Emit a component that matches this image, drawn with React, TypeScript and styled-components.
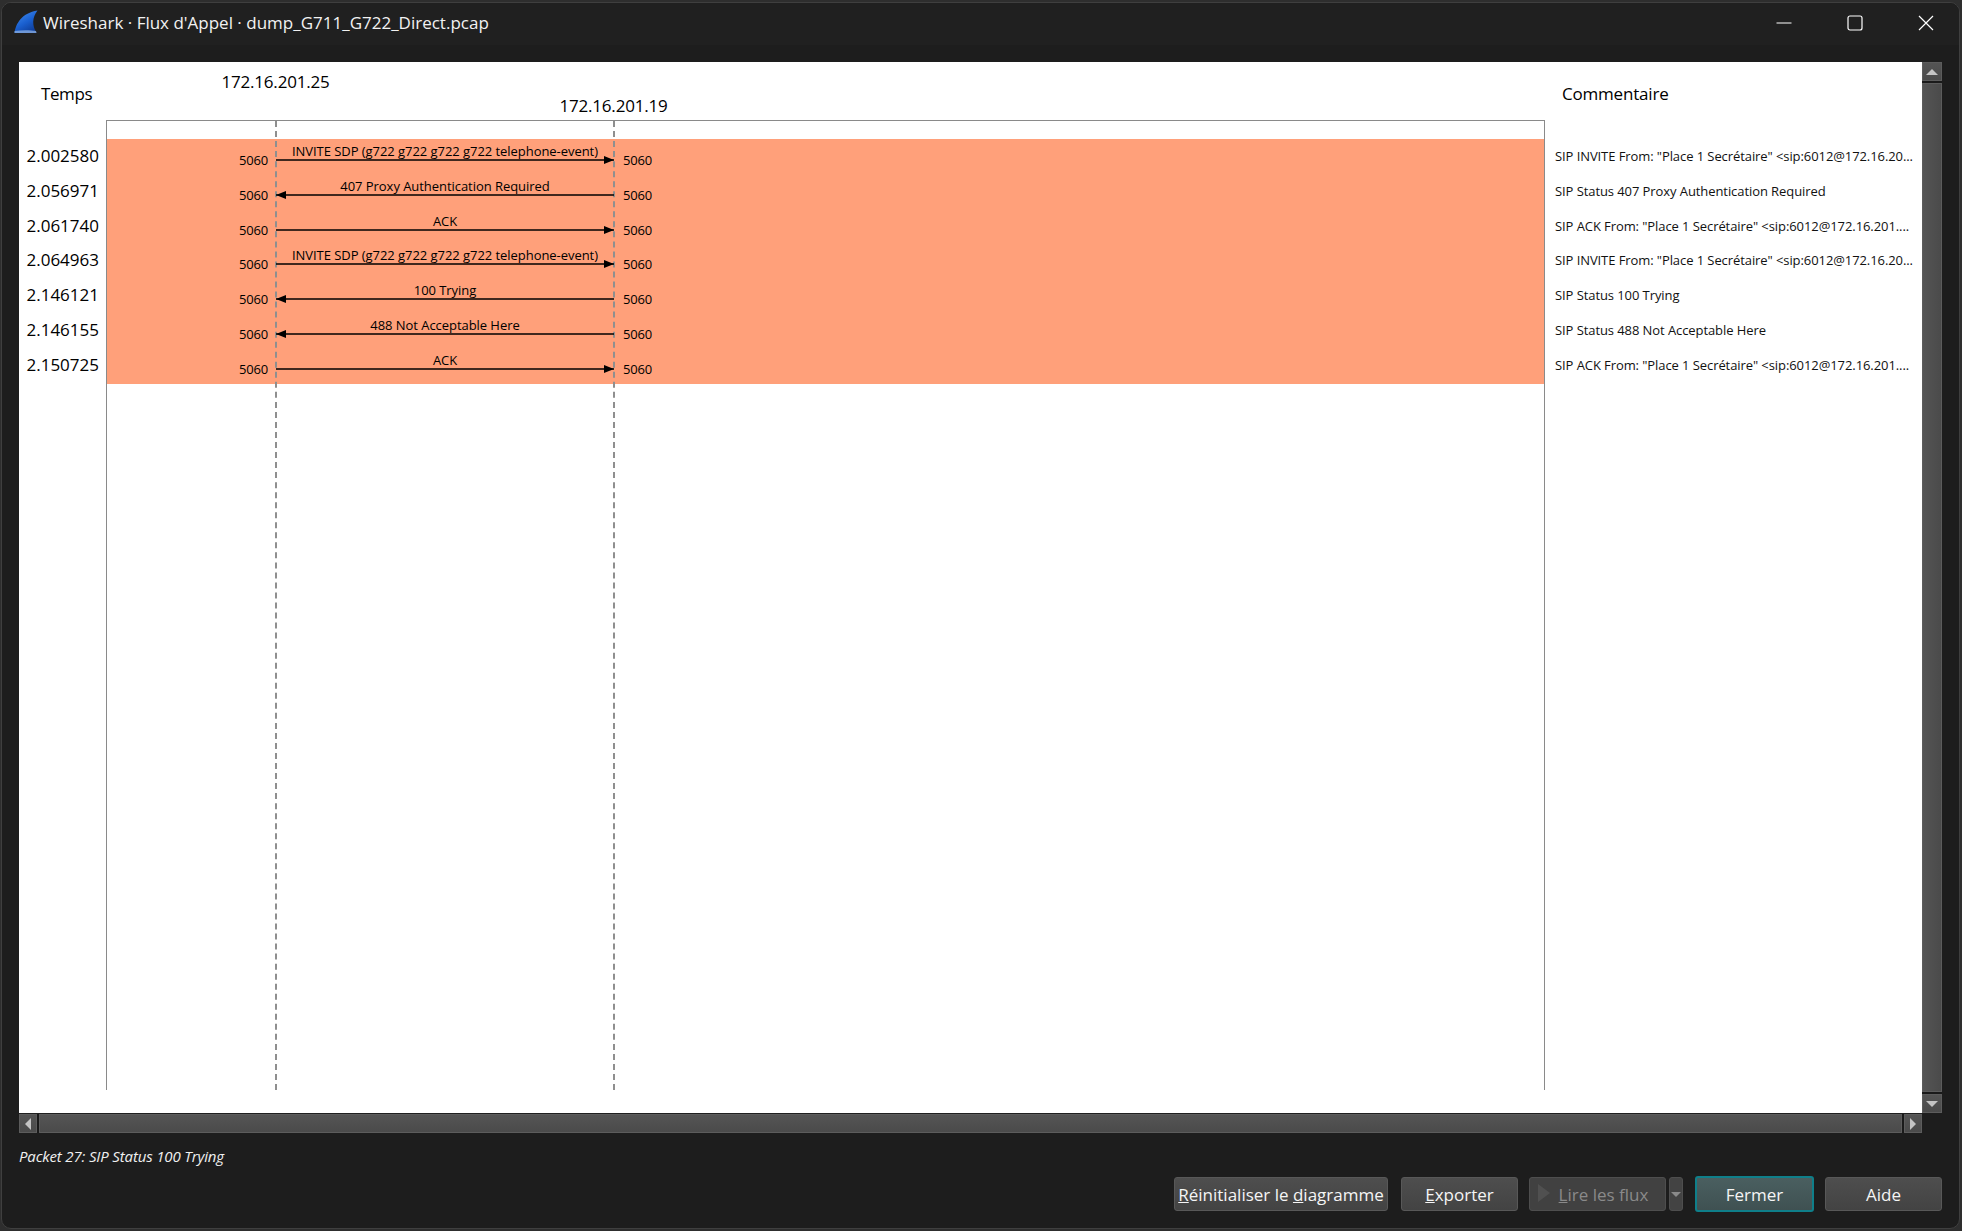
import React from 'react'
import styled, { createGlobalStyle } from 'styled-components'

const UI_FONT = '"Open Sans", "Noto Sans", "Liberation Sans", sans-serif'

const MESSAGES = [
  {
    time: '2.002580',
    label: 'INVITE SDP (g722 g722 g722 g722 telephone-event)',
    dir: 'right',
    comment: 'SIP INVITE From: "Place 1 Secrétaire" <sip:6012@172.16.20...',
  },
  {
    time: '2.056971',
    label: '407 Proxy Authentication Required',
    dir: 'left',
    comment: 'SIP Status 407 Proxy Authentication Required',
  },
  {
    time: '2.061740',
    label: 'ACK',
    dir: 'right',
    comment: 'SIP ACK From: "Place 1 Secrétaire" <sip:6012@172.16.201....',
  },
  {
    time: '2.064963',
    label: 'INVITE SDP (g722 g722 g722 g722 telephone-event)',
    dir: 'right',
    comment: 'SIP INVITE From: "Place 1 Secrétaire" <sip:6012@172.16.20...',
  },
  {
    time: '2.146121',
    label: '100 Trying',
    dir: 'left',
    comment: 'SIP Status 100 Trying',
  },
  {
    time: '2.146155',
    label: '488 Not Acceptable Here',
    dir: 'left',
    comment: 'SIP Status 488 Not Acceptable Here',
  },
  {
    time: '2.150725',
    label: 'ACK',
    dir: 'right',
    comment: 'SIP ACK From: "Place 1 Secrétaire" <sip:6012@172.16.201....',
  },
]

const ROW_HEIGHT = 34.75

const Arrow = ({ dir }: { dir: string }) => (
  <ArrowSvg width="338" height="8" viewBox="0 0 338 8">
    <line x1="0" y1="4" x2="338" y2="4" stroke="#000" strokeWidth="1.6" />
    {dir === 'right' ? (
      <polygon points="338,4 328,0 328,8" fill="#000" />
    ) : (
      <polygon points="0,4 10,0 10,8" fill="#000" />
    )}
  </ArrowSvg>
)

const App = () => {
  return (
    <>
      <GlobalStyle />
      <Window>
        <TitleBar>
          <TitleGroup>
            <FinIcon width="25" height="24" viewBox="0 0 25 24">
              <defs>
                <linearGradient id="fin" x1="0" y1="0" x2="0.6" y2="1">
                  <stop offset="0" stopColor="#4a94f2" />
                  <stop offset="0.6" stopColor="#1a60d0" />
                  <stop offset="1" stopColor="#0f3f9c" />
                </linearGradient>
              </defs>
              <path d="M0.5 23 C2 13 8 3 23.5 0.5 C18 8 18 15 22.5 23 Z" fill="url(#fin)" />
              <path d="M0.5 21 C8 20 16 20 22 21 L22.5 23 L0.5 23 Z" fill="#8fb3e6" opacity="0.75" />
            </FinIcon>
            <Title>Wireshark · Flux d'Appel · dump_G711_G722_Direct.pcap</Title>
          </TitleGroup>
          <WindowControls>
            <svg width="16" height="16" viewBox="0 0 16 16">
              <line x1="0.5" y1="8" x2="15.5" y2="8" stroke="#fff" strokeWidth="1.2" />
            </svg>
            <svg width="16" height="16" viewBox="0 0 16 16">
              <rect x="1" y="1" width="14" height="14" rx="2" fill="none" stroke="#fff" strokeWidth="1.2" />
            </svg>
            <svg width="16" height="16" viewBox="0 0 16 16">
              <path d="M1 1 L15 15 M15 1 L1 15" stroke="#fff" strokeWidth="1.2" />
            </svg>
          </WindowControls>
        </TitleBar>

        <Workspace>
          <ViewColumn>
            <Canvas>
              <HeaderRow>
                <TempsHead>Temps</TempsHead>
                <HostHead $lower={false}>172.16.201.25</HostHead>
                <HostHead $lower>172.16.201.19</HostHead>
                <CommentHead>Commentaire</CommentHead>
              </HeaderRow>
              <DiagramRow>
                <TimeColumn>
                  {MESSAGES.map((m, i) => (
                    <TimeCell key={i}>{m.time}</TimeCell>
                  ))}
                </TimeColumn>
                <Diagram>
                  <Lifeline $at={168} />
                  <Lifeline $at={506} />
                  <Flow>
                    {MESSAGES.map((m, i) => (
                      <FlowRow key={i}>
                        <PortLeft>5060</PortLeft>
                        <MessageCell>
                          <MessageLabel>{m.label}</MessageLabel>
                          <Arrow dir={m.dir} />
                        </MessageCell>
                        <PortRight>5060</PortRight>
                      </FlowRow>
                    ))}
                  </Flow>
                </Diagram>
                <CommentColumn>
                  {MESSAGES.map((m, i) => (
                    <CommentCell key={i}>{m.comment}</CommentCell>
                  ))}
                </CommentColumn>
              </DiagramRow>
            </Canvas>
            <HScroll>
              <ScrollButton $wide>
                <TriLeft />
              </ScrollButton>
              <HThumb />
              <ScrollButton $wide>
                <TriRight />
              </ScrollButton>
            </HScroll>
          </ViewColumn>
          <VScroll>
            <ScrollButton>
              <TriUp />
            </ScrollButton>
            <VThumb />
            <ScrollButton>
              <TriDown />
            </ScrollButton>
          </VScroll>
        </Workspace>

        <StatusLine>Packet 27: SIP Status 100 Trying</StatusLine>

        <ButtonBar>
          <ResetButton $width={214}>
            <u>R</u>éinitialiser le <u>d</u>iagramme
          </ResetButton>
          <Button $width={117}>
            <u>E</u>xporter
          </Button>
          <PlayGroup>
            <PlayButton $width={137} $disabled>
              <PlayGlyph />
              <u>L</u>ire les flux
            </PlayButton>
            <MenuButton>
              <TriDownSmall />
            </MenuButton>
          </PlayGroup>
          <PrimaryButton>Fermer</PrimaryButton>
          <Button $width={117}>Aide</Button>
        </ButtonBar>
      </Window>
    </>
  )
}

const GlobalStyle = createGlobalStyle`
  html, body {
    margin: 0;
    padding: 0;
    background: #2e2e2e;
  }
  body {
    font-family: ${UI_FONT};
  }
`

const Window = styled.div`
  box-sizing: border-box;
  width: 1959px;
  height: 1227px;
  margin: 2px 0 0 1px;
  display: flex;
  flex-direction: column;
  background: #1d1d1d;
  border: 1px solid #3f3f3f;
  border-radius: 10px;
  overflow: hidden;
`

const TitleBar = styled.div`
  flex: none;
  height: 42px;
  box-sizing: border-box;
  display: flex;
  align-items: center;
  justify-content: space-between;
  background: #202020;
  padding: 0 25px 3px 12px;
`

const TitleGroup = styled.div`
  display: flex;
  align-items: center;
  gap: 4px;
`

const FinIcon = styled.svg`
  display: block;
  margin-top: -2px;
`

const Title = styled.span`
  font-size: 17px;
  color: #f2f2f2;
`

const WindowControls = styled.div`
  display: flex;
  align-items: center;
  gap: 55px;
`

const Workspace = styled.div`
  flex: none;
  display: flex;
  height: 1088px;
  padding: 17px 0 0 17px;
  box-sizing: border-box;
`

const ViewColumn = styled.div`
  width: 1903px;
  display: flex;
  flex-direction: column;
`

const Canvas = styled.div`
  flex: 1;
  background: #fff;
  color: #000;
  display: flex;
  flex-direction: column;
`

const HeaderRow = styled.div`
  flex: none;
  height: 58px;
  display: grid;
  grid-template-columns: 87px 339px 337px 702px 60px 378px;
`

const TempsHead = styled.div`
  font-size: 17px;
  letter-spacing: -0.4px;
  padding: 20px 0 0 22px;
  line-height: 24px;
`

const HostHead = styled.div<{ $lower: boolean }>`
  font-size: 17px;
  letter-spacing: -0.2px;
  line-height: 24px;
  text-align: center;
  padding-top: ${(p) => (p.$lower ? '32px' : '8px')};
`

const CommentHead = styled.div`
  grid-column: 6;
  font-size: 17px;
  letter-spacing: -0.2px;
  line-height: 24px;
  padding: 20px 0 0 18px;
`

const DiagramRow = styled.div`
  flex: 1;
  display: grid;
  grid-template-columns: 87px 1439px 377px;
  min-height: 0;
`

const TimeColumn = styled.div`
  padding-top: 19px;
`

const TimeCell = styled.div`
  height: ${ROW_HEIGHT}px;
  line-height: ${ROW_HEIGHT}px;
  text-align: right;
  padding-right: 7px;
  font-size: 17px;
`

const Diagram = styled.div`
  position: relative;
  height: 970px;
  box-sizing: border-box;
  border: 1px solid #8a8a8a;
  border-bottom: none;
  padding-top: 18px;
`

const Lifeline = styled.div<{ $at: number }>`
  position: absolute;
  top: 0;
  bottom: 0;
  left: ${(p) => p.$at}px;
  width: 0;
  border-left: 2px dashed #8f8f8f;
  z-index: 1;
`

const Flow = styled.div`
  background: #ffa07a;
  padding-bottom: 1.75px;
`

const FlowRow = styled.div`
  height: ${ROW_HEIGHT}px;
  display: grid;
  grid-template-columns: 169px 338px 1fr;
  font-size: 13px;
  letter-spacing: -0.05px;
`

const PortLeft = styled.div`
  text-align: right;
  padding: 14px 8px 0 0;
  line-height: 14px;
  letter-spacing: -0.2px;
`

const PortRight = styled.div`
  padding: 14px 0 0 9px;
  line-height: 14px;
  letter-spacing: -0.2px;
`

const MessageCell = styled.div`
  position: relative;
  z-index: 2;
  display: flex;
  flex-direction: column;
  align-items: center;
  padding-top: 6px;
`

const MessageLabel = styled.div`
  line-height: 12px;
  white-space: nowrap;
`

const ArrowSvg = styled.svg`
  display: block;
  margin-top: -1px;
`

const CommentColumn = styled.div`
  padding-top: 19px;
`

const CommentCell = styled.div`
  height: ${ROW_HEIGHT}px;
  line-height: ${ROW_HEIGHT}px;
  padding-left: 10px;
  font-size: 13px;
  letter-spacing: -0.08px;
  white-space: nowrap;
  color: #111;
`

const scrollTrack = `
  background: linear-gradient(180deg, #555 0%, #4a4a4a 100%);
  box-shadow: inset 0 0 0 1px #5c5c5c;
`

const HScroll = styled.div`
  flex: none;
  height: 20px;
  display: flex;
  gap: 2px;
  background: #1a1a1a;
  border-top: 1px solid #202020;
  box-sizing: border-box;
`

const HThumb = styled.div`
  flex: 1;
  ${scrollTrack}
`

const VScroll = styled.div`
  width: 20px;
  display: flex;
  flex-direction: column;
  gap: 2px;
  background: #1a1a1a;
  height: 1051px;
`

const VThumb = styled.div`
  flex: 1;
  background: linear-gradient(90deg, #555 0%, #4a4a4a 100%);
  box-shadow: inset 0 0 0 1px #5c5c5c;
`

const ScrollButton = styled.div<{ $wide?: boolean }>`
  flex: none;
  width: ${(p) => (p.$wide ? '18px' : '20px')};
  height: ${(p) => (p.$wide ? '100%' : '19px')};
  display: flex;
  align-items: center;
  justify-content: center;
  ${scrollTrack}
`

const TriUp = styled.div`
  border-left: 6px solid transparent;
  border-right: 6px solid transparent;
  border-bottom: 6px solid #c4c4c4;
`

const TriDown = styled.div`
  border-left: 6px solid transparent;
  border-right: 6px solid transparent;
  border-top: 6px solid #c4c4c4;
`

const TriLeft = styled.div`
  border-top: 6px solid transparent;
  border-bottom: 6px solid transparent;
  border-right: 6px solid #c4c4c4;
`

const TriRight = styled.div`
  border-top: 6px solid transparent;
  border-bottom: 6px solid transparent;
  border-left: 6px solid #c4c4c4;
`

const TriDownSmall = styled.div`
  border-left: 5px solid transparent;
  border-right: 5px solid transparent;
  border-top: 5px solid #8a8a8a;
`

const StatusLine = styled.div`
  flex: none;
  height: 44px;
  line-height: 47px;
  padding-left: 17px;
  font-size: 15px;
  font-style: italic;
  letter-spacing: -0.15px;
  color: #f0f0f0;
`

const ButtonBar = styled.div`
  flex: none;
  height: 34px;
  display: flex;
  justify-content: flex-end;
  align-items: center;
  gap: 11px;
  padding-right: 17px;
`

const Button = styled.div<{ $width: number; $disabled?: boolean }>`
  box-sizing: border-box;
  width: ${(p) => p.$width}px;
  height: 34px;
  display: flex;
  align-items: center;
  justify-content: center;
  white-space: pre;
  position: relative;
  background: ${(p) => (p.$disabled ? '#414141' : 'linear-gradient(180deg, #4e4e4e, #434343)')};
  border: 1px solid ${(p) => (p.$disabled ? '#4e4e4e' : '#585858')};
  border-radius: 3px;
  font-size: 17px;
  color: ${(p) => (p.$disabled ? '#8a8a8a' : '#f5f5f5')};
`

const ResetButton = styled(Button)`
  margin-right: 2px;
`

const PlayButton = styled(Button)`
  padding-left: 12px;
`

const PlayGroup = styled.div`
  display: flex;
  gap: 3px;
  margin-right: 1px;
`

const PlayGlyph = styled.div`
  position: absolute;
  left: 8px;
  top: 6px;
  border-top: 9px solid transparent;
  border-bottom: 9px solid transparent;
  border-left: 12px solid #505050;
`

const MenuButton = styled.div`
  box-sizing: border-box;
  width: 14px;
  height: 34px;
  display: flex;
  align-items: center;
  justify-content: center;
  background: #434343;
  border: 1px solid #4e4e4e;
  border-radius: 3px;
`

const PrimaryButton = styled.div`
  box-sizing: border-box;
  width: 119px;
  height: 36px;
  display: flex;
  align-items: center;
  justify-content: center;
  background: linear-gradient(180deg, #4a5f60, #3f5152);
  border: 2px solid #0f7f8a;
  border-radius: 3px;
  font-size: 17px;
  color: #f5f5f5;
`

export default App
